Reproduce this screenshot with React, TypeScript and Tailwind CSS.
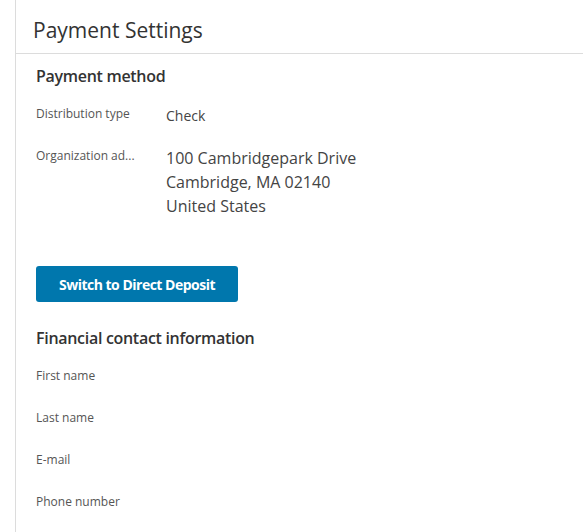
import React from 'react';

const contactFields = ['First name', 'Last name', 'E-mail', 'Phone number'];

export default function App() {
  return (
    <div className="min-h-screen bg-white pl-[15px] font-['Open_Sans',sans-serif]">
      <div className="min-h-[532px] border-l border-[#dcdcdc]">
        {/* Page header */}
        <div className="h-[54px] border-b border-[#dcdcdc] pl-[17px] pt-[16px]">
          <h1 className="text-[21px] leading-[28px] font-normal text-[#333333]">Payment Settings</h1>
        </div>

        <div className="pl-[20px] pt-[10px]">
          {/* Payment method */}
          <h2 className="text-[16px] leading-[24px] font-semibold tracking-[-0.3px] text-[#333333]">
            Payment method
          </h2>

          <div className="mt-[18px] flex items-start">
            <span className="w-[130px] text-[12px] leading-[16px] text-[#555555]">Distribution type</span>
            <span className="text-[14px] leading-[20px] text-[#444444]">Check</span>
          </div>

          <div className="mt-[20px] flex items-start">
            <span className="w-[130px] pt-[2px] text-[12px] leading-[16px] text-[#555555]">Organization ad...</span>
            <div className="text-[16px] leading-[24px] text-[#444444]">
              <div>100 Cambridgepark Drive</div>
              <div>Cambridge, MA 02140</div>
              <div>United States</div>
            </div>
          </div>

          <button className="mt-[48px] h-[36px] w-[202px] rounded-[3px] bg-[#0077ad] text-[14px] font-bold tracking-[-0.5px] text-white">
            Switch to Direct Deposit
          </button>

          {/* Financial contact */}
          <h2 className="mt-[24px] text-[16px] leading-[24px] font-semibold tracking-[-0.3px] text-[#333333]">
            Financial contact information
          </h2>

          <div className="mt-[18px] flex flex-col gap-[26px]">
            {contactFields.map((label) => (
              <span key={label} className="text-[12px] leading-[16px] text-[#555555]">
                {label}
              </span>
            ))}
          </div>
        </div>
      </div>
    </div>
  );
}
